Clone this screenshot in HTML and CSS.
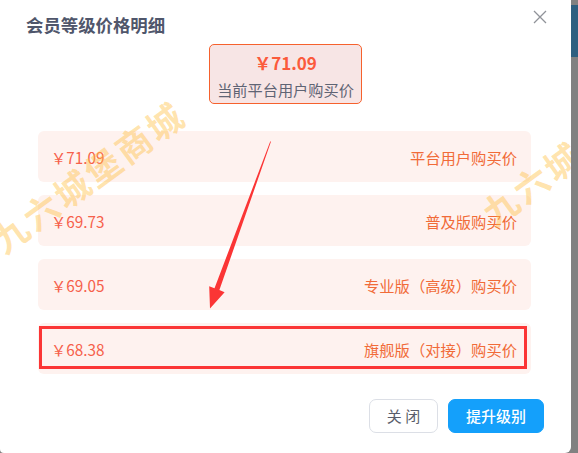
FILE: index.html
```html
<!DOCTYPE html>
<html lang="zh-CN">
<head>
<meta charset="utf-8">
<title>会员等级价格明细</title>
<link rel="stylesheet" href="styles.css">
</head>
<body>
<div class="screen">
  <div class="dialog">
    <div class="dialog-header">
      <h2 class="dialog-title">会员等级价格明细</h2>
      <button class="close-btn" aria-label="关闭">
        <svg width="14" height="14" viewBox="0 0 14 14"><path d="M1 1L13 13M13 1L1 13" stroke="#909399" stroke-width="1.3" fill="none"/></svg>
      </button>
    </div>

    <div class="summary">
      <div class="summary-box">
        <div class="summary-price">￥71.09</div>
        <div class="summary-label">当前平台用户购买价</div>
      </div>
    </div>

    <div class="price-list">
      <div class="price-row"><span class="price">￥71.09</span><span class="label">平台用户购买价</span></div>
      <div class="price-row"><span class="price">￥69.73</span><span class="label">普及版购买价</span></div>
      <div class="price-row"><span class="price">￥69.05</span><span class="label">专业版（高级）购买价</span></div>
      <div class="price-row highlight-row"><span class="price">￥68.38</span><span class="label">旗舰版（对接）购买价</span><span class="mark-box"></span></div>
    </div>

    <div class="dialog-footer">
      <button class="btn btn-plain">关 闭</button>
      <button class="btn btn-primary">提升级别</button>
    </div>

    <span class="watermark wm-left">九六城堡商城</span>
    <span class="watermark wm-right">九六城堡商城</span>

    <svg class="arrow" width="571" height="453" viewBox="0 0 571 453">
      <polygon points="271,141.5 219.4,290.1 224.6,292.2 210,308.5 209.2,286.2 214.5,288.3 270.2,141.5" fill="#fb3535"/>
    </svg>
  </div>
  <div class="strip"><div class="strip-thumb"></div></div>
</div>
</body>
</html>
```

FILE: styles.css
```css
* { box-sizing: border-box; }

html, body {
  margin: 0;
  padding: 0;
  background: #818181;
  font-family: "Noto Sans CJK SC", "Noto Sans", sans-serif;
}

.screen {
  display: flex;
  width: 578px;
  height: 453px;
  overflow: hidden;
}

.dialog {
  position: relative;
  width: 571px;
  height: 453px;
  background: #ffffff;
  border-radius: 0 0 6px 4px;
  overflow: hidden;
  flex: none;
}

.strip {
  flex: 1;
  background: #818181;
  padding-top: 5px;
}

.strip-thumb {
  height: 52px;
  background: #2d5f80;
}

.dialog-header {
  padding: 14px 26px 0 26px;
  height: 36px;
}

.dialog-title {
  margin: 0;
  font-size: 17.4px;
  line-height: 22px;
  font-weight: 700;
  color: #4f566b;
}

.close-btn {
  position: absolute;
  top: 10px;
  right: 24px;
  width: 14px;
  height: 14px;
  padding: 0;
  border: 0;
  background: none;
  display: block;
}

.close-btn svg { display: block; }

.summary {
  display: flex;
  justify-content: center;
  margin-top: 8px;
}

.summary-box {
  width: 153px;
  height: 60px;
  border: 1px solid #f6612d;
  border-radius: 5px;
  background: #f7e5e5;
  padding-top: 7px;
  text-align: center;
}

.summary-price {
  font-size: 17px;
  line-height: 22px;
  font-weight: 700;
  color: #fb5a3c;
}

.summary-label {
  margin-top: 4px;
  font-size: 15.2px;
  line-height: 22px;
  color: #5f6474;
}

.price-list {
  display: flex;
  flex-direction: column;
  gap: 13px;
  margin: 27px 40px 0 38px;
}

.price-row {
  position: relative;
  height: 51px;
  padding: 0 14px 0 13px;
  display: flex;
  align-items: center;
  justify-content: space-between;
  background: #fef2ef;
  border-radius: 6px;
  font-size: 15.3px;
  line-height: 22px;
}

.price { color: #f6604a; }
.label { color: #f16b38; }

.mark-box {
  position: absolute;
  left: 1px;
  top: 3px;
  width: 488px;
  height: 43px;
  border: 3px solid #fb3535;
}

.dialog-footer {
  display: flex;
  justify-content: flex-end;
  gap: 10px;
  margin-top: 25px;
  padding-right: 27px;
}

.btn {
  height: 34px;
  border-radius: 7px;
  font-family: "Noto Sans CJK SC", "Noto Sans", sans-serif;
  font-size: 15px;
  line-height: 20px;
  padding: 0;
  cursor: pointer;
}

.btn-plain {
  width: 69px;
  background: #ffffff;
  border: 1px solid #dcdfe6;
  color: #5a5e6b;
}

.btn-primary {
  width: 96px;
  background: #14a0fb;
  border: 1px solid #14a0fb;
  color: #ffffff;
  font-weight: 500;
}

.watermark {
  position: absolute;
  white-space: nowrap;
  font-size: 35px;
  font-weight: 700;
  letter-spacing: 3px;
  line-height: 38px;
  color: rgba(255, 190, 60, 0.42);
  transform: translate(-50%, -50%) rotate(-36deg);
  pointer-events: none;
}

.wm-left { left: 88px; top: 176px; }
.wm-right { left: 578px; top: 149px; }

.arrow {
  position: absolute;
  left: 0;
  top: 0;
  pointer-events: none;
}
```
